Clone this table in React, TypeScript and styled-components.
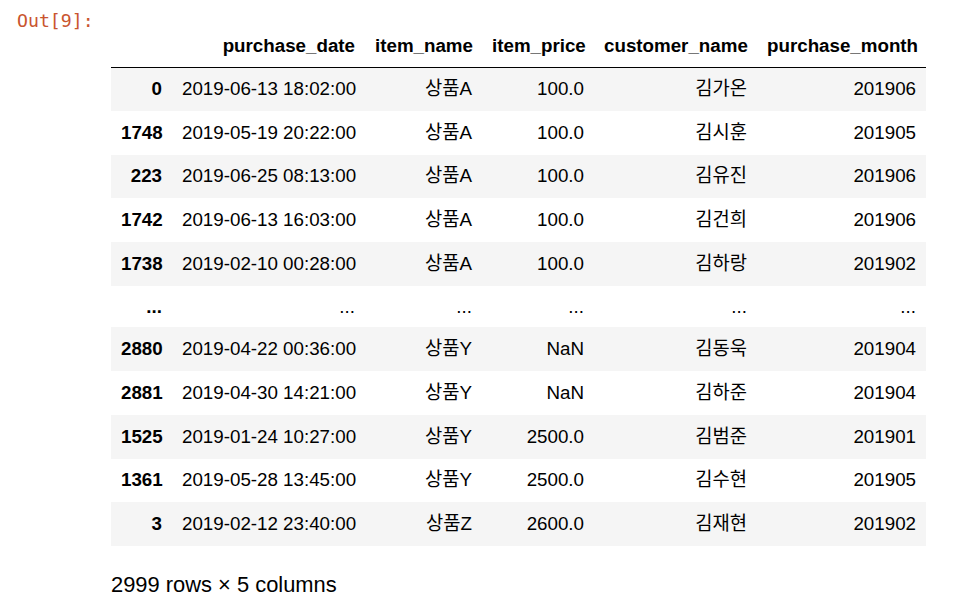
import React from 'react';
import styled, { createGlobalStyle } from 'styled-components';

const GlobalStyle = createGlobalStyle`
  html, body {
    margin: 0;
    padding: 0;
    background: #fff;
  }
  body {
    font-family: "Liberation Sans", Arial, "Noto Sans CJK KR", sans-serif;
    color: #000;
  }
`;

const OutputRow = styled.div`
  display: flex;
  align-items: flex-start;
  width: 955px;
`;

const Prompt = styled.div`
  width: 111px;
  flex: none;
  box-sizing: border-box;
  padding-left: 17px;
  margin-top: 10px;
  font-family: "DejaVu Sans Mono", "Liberation Mono", monospace;
  font-size: 18.2px;
  line-height: 22px;
  color: #c9552f;
`;

const OutputBody = styled.div`
  display: flex;
  flex-direction: column;
  padding-top: 25px;
`;

const Table = styled.table`
  border-collapse: collapse;
  border-spacing: 0;
  table-layout: fixed;
  width: 815px;
  font-size: 18.75px;
  font-family: "Liberation Sans", Arial, "Noto Sans CJK KR", sans-serif;
`;

const HeadRow = styled.tr`
  height: 42px;
  border-bottom: 1px solid #000;
`;

const BodyRow = styled.tr<{ $striped: boolean; $short?: boolean }>`
  height: ${({ $short }) => ($short ? '41.5px' : '43.75px')};
  background: ${({ $striped }) => ($striped ? '#f5f5f5' : '#fff')};
`;

const Th = styled.th`
  padding: 0 10px;
  text-align: right;
  vertical-align: middle;
  font-weight: 700;
  white-space: nowrap;
  line-height: 20px;
`;

const Td = styled.td`
  padding: 0 10px;
  text-align: right;
  vertical-align: middle;
  font-weight: 400;
  white-space: nowrap;
  line-height: 20px;
`;

const Footer = styled.div`
  margin-top: 26px;
  font-size: 21.9px;
  line-height: 26px;
`;

const widths = [61, 193, 117, 112, 163, 169];
const columns = ['purchase_date', 'item_name', 'item_price', 'customer_name', 'purchase_month'];

type Row = [string, string, string, string, string, string];

const rows: Row[] = [
  ['0', '2019-06-13 18:02:00', '상품A', '100.0', '김가온', '201906'],
  ['1748', '2019-05-19 20:22:00', '상품A', '100.0', '김시훈', '201905'],
  ['223', '2019-06-25 08:13:00', '상품A', '100.0', '김유진', '201906'],
  ['1742', '2019-06-13 16:03:00', '상품A', '100.0', '김건희', '201906'],
  ['1738', '2019-02-10 00:28:00', '상품A', '100.0', '김하랑', '201902'],
  ['...', '...', '...', '...', '...', '...'],
  ['2880', '2019-04-22 00:36:00', '상품Y', 'NaN', '김동욱', '201904'],
  ['2881', '2019-04-30 14:21:00', '상품Y', 'NaN', '김하준', '201904'],
  ['1525', '2019-01-24 10:27:00', '상품Y', '2500.0', '김범준', '201901'],
  ['1361', '2019-05-28 13:45:00', '상품Y', '2500.0', '김수현', '201905'],
  ['3', '2019-02-12 23:40:00', '상품Z', '2600.0', '김재현', '201902'],
];

const App: React.FC = () => {
  return (
    <>
      <GlobalStyle />
      <OutputRow>
        <Prompt>Out[9]:</Prompt>
        <OutputBody>
          <Table>
            <colgroup>
              {widths.map((w, i) => (
                <col key={i} style={{ width: w }} />
              ))}
            </colgroup>
            <thead>
              <HeadRow>
                <Th />
                {columns.map((c) => (
                  <Th key={c}>{c}</Th>
                ))}
              </HeadRow>
            </thead>
            <tbody>
              {rows.map((r, i) => (
                <BodyRow key={i} $striped={i % 2 === 0} $short={r[0] === '...'}>
                  <Th>{r[0]}</Th>
                  {r.slice(1).map((v, j) => (
                    <Td key={j}>{v}</Td>
                  ))}
                </BodyRow>
              ))}
            </tbody>
          </Table>
          <Footer>2999 rows × 5 columns</Footer>
        </OutputBody>
      </OutputRow>
    </>
  );
};

export default App;
